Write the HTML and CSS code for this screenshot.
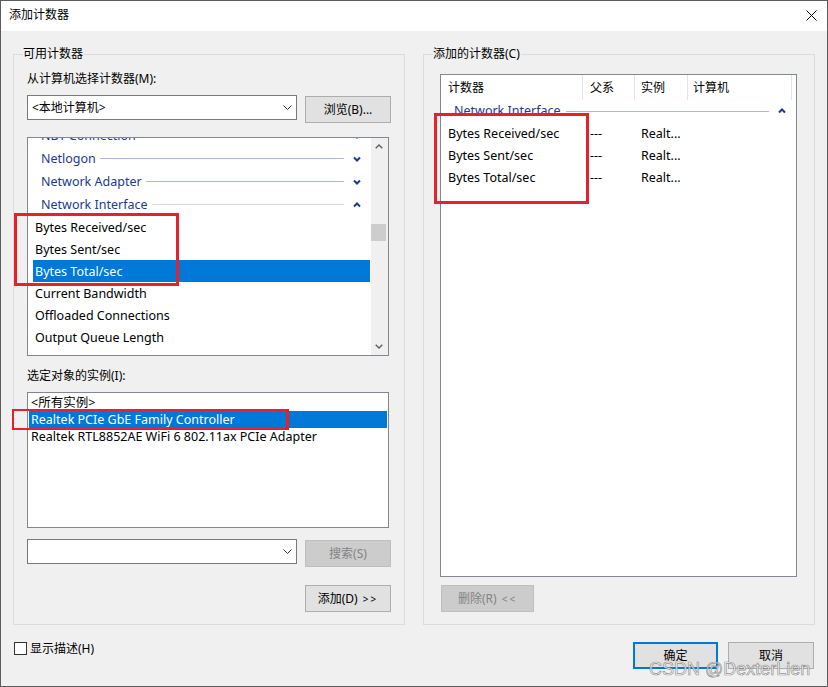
FILE: index.html
```html
<!DOCTYPE html>
<html lang="zh-CN">
<head>
<meta charset="utf-8">
<title>添加计数器</title>
<link rel="stylesheet" href="styles.css">
</head>
<body>
<div class="window">
  <div class="titlebar">
    <span class="title">添加计数器</span>
    <svg class="close" width="11" height="11" viewBox="0 0 11 11"><path d="M0.5 0.5L10.5 10.5M10.5 0.5L0.5 10.5" stroke="#000" stroke-width="1" fill="none"/></svg>
  </div>
  <div class="body">
    <div class="groups">
      <section class="group">
        <div class="group-head"><span class="legend">可用计数器</span></div>
        <div class="group-body left-body">
          <div class="label">从计算机选择计数器(M):</div>
          <div class="row">
            <div class="combo">
              <span class="combo-text">&lt;本地计算机&gt;</span>
              <svg class="combo-arrow" width="9" height="5" viewBox="0 0 9 5"><path d="M0.5 0.5L4.5 4.5L8.5 0.5" stroke="#333" stroke-width="1" fill="none"/></svg>
            </div>
            <button class="btn btn-side">浏览(B)...</button>
          </div>
          <div class="listbox counters">
            <div class="list-view">
              <div class="list-scroll">
                <div class="cat"><span class="txt">NBT Connection</span><i class="line"></i><svg class="chev" width="8" height="6" viewBox="0 0 8 6"><path d="M1 1.5L4 4.5L7 1.5" stroke="#1e3991" stroke-width="2" fill="none"/></svg></div>
                <div class="cat"><span class="txt">Netlogon</span><i class="line"></i><svg class="chev" width="8" height="6" viewBox="0 0 8 6"><path d="M1 1.5L4 4.5L7 1.5" stroke="#1e3991" stroke-width="2" fill="none"/></svg></div>
                <div class="cat"><span class="txt">Network Adapter</span><i class="line"></i><svg class="chev" width="8" height="6" viewBox="0 0 8 6"><path d="M1 1.5L4 4.5L7 1.5" stroke="#1e3991" stroke-width="2" fill="none"/></svg></div>
                <div class="cat"><span class="txt">Network Interface</span><i class="line light"></i><svg class="chev" width="8" height="6" viewBox="0 0 8 6"><path d="M1 4.5L4 1.5L7 4.5" stroke="#1e3991" stroke-width="2" fill="none"/></svg></div>
                <div class="item"><span class="txt">Bytes Received/sec</span></div>
                <div class="item"><span class="txt">Bytes Sent/sec</span></div>
                <div class="item sel"><span class="txt">Bytes Total/sec</span></div>
                <div class="item"><span class="txt">Current Bandwidth</span></div>
                <div class="item"><span class="txt">Offloaded Connections</span></div>
                <div class="item"><span class="txt">Output Queue Length</span></div>
              </div>
            </div>
            <div class="vscroll">
              <div class="sb-btn"><svg width="8" height="5" viewBox="0 0 8 5"><path d="M0.7 4.3L4 1L7.3 4.3" stroke="#606060" stroke-width="1.4" fill="none"/></svg></div>
              <div class="sb-gap"></div>
              <div class="sb-thumb"></div>
              <div class="sb-fill"></div>
              <div class="sb-btn"><svg width="8" height="5" viewBox="0 0 8 5"><path d="M0.7 0.7L4 4L7.3 0.7" stroke="#606060" stroke-width="1.4" fill="none"/></svg></div>
            </div>
          </div>
          <div class="label label2">选定对象的实例(I):</div>
          <div class="listbox instances">
            <div class="inst">&lt;所有实例&gt;</div>
            <div class="inst sel">Realtek PCIe GbE Family Controller</div>
            <div class="inst">Realtek RTL8852AE WiFi 6 802.11ax PCIe Adapter</div>
          </div>
          <div class="row row2">
            <div class="combo">
              <span class="combo-text"></span>
              <svg class="combo-arrow" width="9" height="5" viewBox="0 0 9 5"><path d="M0.5 0.5L4.5 4.5L8.5 0.5" stroke="#333" stroke-width="1" fill="none"/></svg>
            </div>
            <button class="btn btn-side disabled">搜索(S)</button>
          </div>
          <div class="row add-row">
            <button class="btn btn-side">添加(D) <span class="arrows">&gt;&gt;</span></button>
          </div>
        </div>
      </section>

      <section class="group">
        <div class="group-head"><span class="legend">添加的计数器(C)</span></div>
        <div class="group-body right-body">
          <div class="listbox added">
            <div class="hdr">
              <div class="hc c1">计数器</div>
              <div class="hc c2">父系</div>
              <div class="hc c3">实例</div>
              <div class="hc c4">计算机</div>
            </div>
            <div class="cat rcat"><span class="txt">Network Interface</span><i class="line"></i><svg class="chev" width="8" height="6" viewBox="0 0 8 6"><path d="M1 4.5L4 1.5L7 4.5" stroke="#1e3991" stroke-width="2" fill="none"/></svg></div>
            <div class="drow"><span class="dc c1">Bytes Received/sec</span><span class="dc c2">---</span><span class="dc c3">Realt...</span><span class="dc c4"></span></div>
            <div class="drow"><span class="dc c1">Bytes Sent/sec</span><span class="dc c2">---</span><span class="dc c3">Realt...</span><span class="dc c4"></span></div>
            <div class="drow"><span class="dc c1">Bytes Total/sec</span><span class="dc c2">---</span><span class="dc c3">Realt...</span><span class="dc c4"></span></div>
          </div>
          <div class="row">
            <button class="btn btn-del disabled">删除(R) <span class="arrows">&lt;&lt;</span></button>
          </div>
        </div>
      </section>
    </div>

    <div class="footer">
      <label class="check"><span class="box"></span><span class="check-text">显示描述(H)</span></label>
      <div class="actions">
        <button class="btn btn-foot default">确定</button>
        <button class="btn btn-foot">取消</button>
      </div>
    </div>
  </div>

  <div class="mark mark1"></div>
  <div class="mark mark2"></div>
  <div class="mark mark3"></div>
  <div class="watermark">CSDN @DexterLien</div>
</div>
</body>
</html>
```

FILE: styles.css
```css
* { box-sizing: border-box; }
html, body { margin: 0; padding: 0; }
body {
  width: 828px;
  height: 687px;
  overflow: hidden;
  background: #f0f0f0;
  font-family: "Noto Sans", "Noto Sans CJK SC", sans-serif;
  font-size: 12px;
  color: #000;
}
.window {
  position: relative;
  width: 828px;
  height: 687px;
  border: 1px solid #5c5c5c;
  background: #f0f0f0;
  display: flex;
  flex-direction: column;
}
.titlebar {
  height: 30px;
  flex: none;
  background: #fff;
  display: flex;
  align-items: center;
  justify-content: space-between;
  padding: 0 10px 2px 8px;
}
.title { line-height: 16px; }
.close { display: block; }

.body {
  flex: 1;
  padding: 15px 12px 0 12px;
  display: flex;
  flex-direction: column;
}
.groups { display: flex; gap: 18px; }
.group { width: 392px; display: flex; flex-direction: column; }
.group-head { display: flex; height: 16px; }
.group-head::before {
  content: "";
  width: 9px;
  margin-top: 8px;
  border-top: 1px solid #dcdcdc;
  border-left: 1px solid #dcdcdc;
}
.group-head::after {
  content: "";
  flex: 1;
  margin-top: 8px;
  border-top: 1px solid #dcdcdc;
  border-right: 1px solid #dcdcdc;
}
.legend { line-height: 16px; padding: 0 1px 0 0; }
.group-body {
  flex: 1;
  border: 1px solid #dcdcdc;
  border-top: none;
  display: flex;
  flex-direction: column;
}
.left-body { padding: 9px 13px 12px 13px; }
.right-body { padding: 12px 17px 12px 16px; }

.label { line-height: 16px; height: 16px; }
.label2 { margin-top: 12px; }
.row { display: flex; justify-content: space-between; align-items: flex-start; margin-top: 8px; }
.row2 { margin-top: 11px; }
.add-row { margin-top: 18px; justify-content: flex-end; }

.combo {
  width: 270px;
  height: 25px;
  border: 1px solid #7a7a7a;
  background: #fff;
  display: flex;
  align-items: center;
  justify-content: space-between;
  padding: 0 4px 0 4px;
}
.combo-text { line-height: 16px; }
.combo-arrow { display: block; }

.btn {
  height: 27px;
  padding: 0;
  margin: 0;
  background: #e1e1e1;
  border: 1px solid #adadad;
  border-radius: 0;
  font-family: inherit;
  font-size: 12px;
  color: #000;
  line-height: 16px;
}
.btn-side { width: 86px; margin-top: 1px; }
.add-row .btn-side { margin-top: 0; }
.btn.disabled { background: #cccccc; border-color: #bfbfbf; color: #838383; }
.btn-del { width: 93px; margin-left: 1px; }
.arrows { font-size: 10px; letter-spacing: 2px; margin-left: 2px; }
.btn-foot { width: 86px; }
.btn.default { border: 2px solid #0078d7; width: 85px; }

.listbox { border: 1px solid #828790; background: #fff; }
.counters { margin-top: 14px; width: 362px; height: 219px; display: flex; }
.list-view { flex: 1; overflow: hidden; }
.list-scroll { margin-top: -14px; }
.txt { line-height: 16px; white-space: nowrap; }
.cat {
  height: 23px;
  display: flex;
  align-items: center;
  padding: 0 10px 0 13px;
  color: #1e3991;
  font-size: 12.5px;
}
.cat .line { flex: 1; height: 1px; background: #a9b8df; margin: 0 9px 0 4px; }
.cat .line.light { background: #cfd9ef; }
.chev { display: block; flex: none; }
.item {
  height: 22px;
  display: flex;
  align-items: center;
  margin: 0 1px 0 5px;
  padding: 2px 0 0 2px;
  font-size: 12.5px;
}
.sel { background: #0078d7; color: #fff; }

.vscroll { width: 17px; flex: none; background: #f0f0f0; display: flex; flex-direction: column; }
.sb-btn { height: 17px; display: flex; align-items: center; justify-content: center; padding-right: 1px; }
.sb-btn svg { display: block; }
.sb-gap { height: 69px; }
.sb-thumb { height: 17px; margin: 0 2px 0 0; background: #cdcdcd; }
.sb-fill { flex: 1; }

.instances { margin-top: 8px; width: 362px; height: 136px; padding-top: 1px; }
.inst { height: 17px; line-height: 17px; margin: 0 1px; padding-left: 2px; white-space: nowrap; font-size: 12.5px; }

.added { flex: 1; display: flex; flex-direction: column; }
.hdr { display: flex; height: 25px; flex: none; }
.hc {
  line-height: 25px;
  border-right: 1px solid #e5e5e5;
  padding-left: 7px;
  white-space: nowrap;
}
.c1 { width: 142px; }
.c2 { width: 52px; }
.c3 { width: 53px; padding-left: 6px; }
.c4 { width: 104px; padding-left: 5px; }
.rcat { height: 22px; padding-right: 10px; }
.rcat .line { margin-right: 9px; margin-left: 5px; }
.drow { display: flex; height: 22px; align-items: center; flex: none; font-size: 12.5px; padding-top: 1px; }
.dc { line-height: 16px; padding-left: 7px; white-space: nowrap; }
.dc.c3 { padding-left: 6px; }

.footer {
  margin-top: 17px;
  display: flex;
  justify-content: space-between;
  align-items: flex-start;
  padding: 0 1px 0 1px;
}
.check { display: flex; align-items: center; gap: 3px; height: 13px; }
.box { width: 13px; height: 13px; border: 1px solid #333; background: #fff; }
.check-text { line-height: 16px; }
.actions { display: flex; gap: 10px; }

.mark { position: absolute; border: 3px solid #e5222b; }
.mark1 { left: 13px; top: 212px; width: 165px; height: 73px; }
.mark2 { left: 11px; top: 408px; width: 277px; height: 21px; border-width: 2px 3px 2px 2px; }
.mark3 { left: 433px; top: 112px; width: 155px; height: 91px; }

.watermark {
  position: absolute;
  left: 648px;
  top: 659px;
  font-family: "Liberation Sans", sans-serif;
  font-size: 18px;
  line-height: 18px;
  color: rgba(255, 255, 255, 0.85);
  -webkit-text-stroke: 0.7px rgba(110, 110, 110, 0.75);
  white-space: nowrap;
}
```
